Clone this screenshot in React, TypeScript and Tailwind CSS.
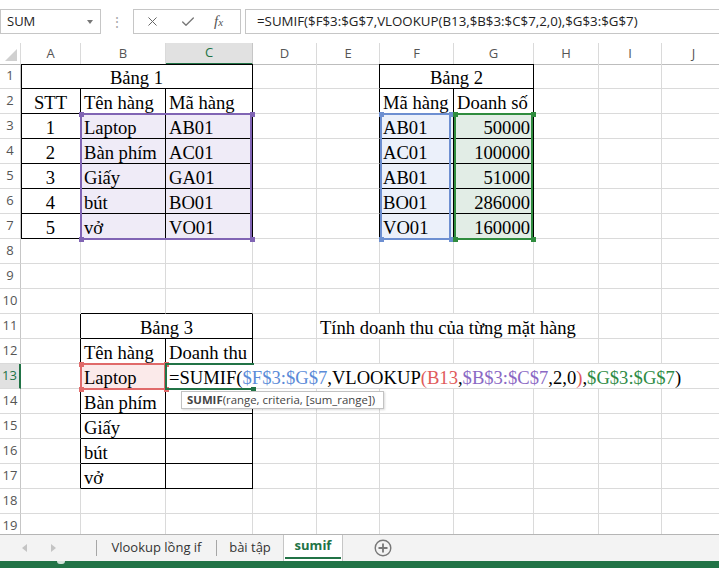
import type { ReactNode } from "react";
import { Check, X } from "lucide-react";

const GRID = "grid grid-cols-[21px_60px_85px_87px_64px_63px_74px_80px_65px_63px_64px]";
const COLS = ["A", "B", "C", "D", "E", "F", "G", "H", "I", "J"];
const ROWS = Array.from({ length: 19 }, (_, i) => i + 1);

// black-bordered tables: [r1, c1, r2, c2]
const boxes = [
  [1, 0, 7, 2],
  [1, 5, 7, 6],
  [11, 1, 17, 2],
];
const inBox = (r: number, c: number) =>
  boxes.some(([r1, c1, r2, c2]) => r >= r1 && r <= r2 && c >= c1 && c <= c2);

const PURPLE = "bg-[#efebf7]";
const BLUE = "bg-[#ebf0fa]";
const GREEN = "bg-[#e2ede6]";
const RED = "bg-[#fbeaea]";

type Cell = { c: number; span?: number; text?: ReactNode; align?: "l" | "c" | "r"; fill?: string; over?: boolean };

const formula = (
  <>
    =SUMIF(<span className="text-[#5b8bd8]">$F$3:$G$7</span>,VLOOKUP
    <span className="text-[#e05a5a]">(B13</span>,<span className="text-[#8a68c4]">$B$3:$C$7</span>,2,0
    <span className="text-[#e05a5a]">)</span>,<span className="text-[#2e8b45]">$G$3:$G$7</span>)
  </>
);

const items = [
  ["Laptop", "AB01", "AB01", "50000"],
  ["Bàn phím", "AC01", "AC01", "100000"],
  ["Giấy", "GA01", "AB01", "51000"],
  ["bút", "BO01", "BO01", "286000"],
  ["vở", "VO01", "VO01", "160000"],
];

const data: Record<number, Cell[]> = {
  1: [
    { c: 0, span: 3, text: "Bảng 1", align: "c" },
    { c: 5, span: 2, text: "Bảng 2", align: "c" },
  ],
  2: [
    { c: 0, text: "STT", align: "c" },
    { c: 1, text: "Tên hàng" },
    { c: 2, text: "Mã hàng" },
    { c: 5, text: "Mã hàng" },
    { c: 6, text: "Doanh số" },
  ],
  11: [
    { c: 1, span: 2, text: "Bảng 3", align: "c" },
    { c: 4, text: "Tính doanh thu của từng mặt hàng", over: true },
  ],
  12: [
    { c: 1, text: "Tên hàng" },
    { c: 2, text: "Doanh thu" },
  ],
  13: [
    { c: 1, text: "Laptop", fill: RED },
    { c: 2, text: formula, over: true },
  ],
  14: [{ c: 1, text: "Bàn phím" }],
  15: [{ c: 1, text: "Giấy" }],
  16: [{ c: 1, text: "bút" }],
  17: [{ c: 1, text: "vở" }],
};

items.forEach(([name, code, code2, sales], i) => {
  data[i + 3] = [
    { c: 0, text: String(i + 1), align: "c" },
    { c: 1, text: name, fill: PURPLE },
    { c: 2, text: code, fill: PURPLE },
    { c: 5, text: code2, fill: BLUE },
    { c: 6, text: sales, align: "r", fill: GREEN },
  ];
});

function SheetRow({ r }: { r: number }) {
  const cells = data[r] ?? [];
  const out: ReactNode[] = [];
  let c = 0;
  while (c < 10) {
    const cell = cells.find((x) => x.c === c);
    const span = cell?.span ?? 1;
    const last = c + span - 1;
    const rightBlack = inBox(r, last) || inBox(r, last + 1);
    const bottomBlack = inBox(r, c) || inBox(r + 1, c);
    let shadow = "";
    if (r === 1 && c === 0 && inBox(r, c)) shadow = "shadow-[inset_1px_1px_0_#000]";
    else if (r === 1 && inBox(r, c)) shadow = "shadow-[inset_0_1px_0_#000]";
    else if (c === 0 && inBox(r, c)) shadow = "shadow-[inset_1px_0_0_#000]";
    const align = cell?.align ?? "l";
    out.push(
      <div
        key={c}
        className={`flex h-[25px] min-w-0 border-r border-b ${span === 3 ? "col-span-3" : span === 2 ? "col-span-2" : ""} ${
          rightBlack ? "border-r-black" : "border-r-[#dadada]"
        } ${bottomBlack ? "border-b-black" : "border-b-[#dadada]"} ${shadow} ${cell?.fill ?? ""} ${
          align === "c" ? "justify-center" : align === "r" ? "justify-end pr-[3px]" : "pl-[3px]"
        } ${cell?.over ? "overflow-visible" : "overflow-hidden"}`}
      >
        {cell?.text != null &&
          (cell.over ? (
            <span className="relative z-10 h-[24px] whitespace-nowrap bg-white pr-[3px] leading-[27px]">{cell.text}</span>
          ) : (
            <span className="whitespace-nowrap leading-[27px]">{cell.text}</span>
          ))}
      </div>
    );
    c += span;
  }
  const sel = r === 13;
  return (
    <div className={GRID}>
      <div
        className={`flex h-[25px] items-center justify-center border-b border-b-[#dadada] font-['Open_Sans',sans-serif] text-[13px] ${
          sel ? "border-r-2 border-r-[#217346] bg-[#e1e1e1] text-[#217346]" : "border-r border-r-[#c6c6c6] text-[#555]"
        }`}
      >
        {r}
      </div>
      {out}
    </div>
  );
}

function Handle({ x, y, color }: { x: number; y: number; color: string }) {
  return <div className={`absolute h-[5px] w-[5px] ${color}`} style={{ left: x - 2, top: y - 2 }} />;
}

function RangeBox({ x1, y1, x2, y2, border, dot }: { x1: number; y1: number; x2: number; y2: number; border: string; dot: string }) {
  return (
    <>
      <div className={`absolute border-2 ${border}`} style={{ left: x1 - 1, top: y1 - 1, width: x2 - x1 + 1, height: y2 - y1 + 2 }} />
      <Handle x={x1} y={y1} color={dot} />
      <Handle x={x2} y={y1} color={dot} />
      <Handle x={x1} y={y2} color={dot} />
      <Handle x={x2} y={y2} color={dot} />
    </>
  );
}

export default function App() {
  return (
    <div className="flex h-[568px] w-[719px] flex-col overflow-hidden bg-white">
      {/* formula bar */}
      <div className="flex h-[43px] shrink-0 items-start pt-[9px] font-['Open_Sans',sans-serif] text-[13px] text-[#222]">
        <div className="flex h-[25px] w-[101px] shrink-0 items-center justify-between border border-[#c6c6c6] pl-[6px] pr-[7px]">
          <span>SUM</span>
          <span className="mt-[1px] h-0 w-0 border-x-[3.5px] border-t-[4px] border-x-transparent border-t-[#777]" />
        </div>
        <div className="flex h-[25px] w-[32px] shrink-0 items-center justify-center text-[14px] leading-none text-[#aaa]">⋮</div>
        <div className="flex h-[25px] w-[108px] shrink-0 items-center border border-[#c6c6c6]">
          <X className="ml-[11px] h-[15px] w-[15px] text-[#666]" strokeWidth={1.6} />
          <Check className="ml-[20px] h-[16px] w-[16px] text-[#777]" strokeWidth={2} />
          <span className="ml-[18px] font-['Liberation_Serif',serif] text-[15px] italic text-[#555]">
            f<span className="text-[11px]">x</span>
          </span>
        </div>
        <div className="ml-[4px] mr-[-20px] flex h-[25px] flex-1 items-center border border-[#c6c6c6] pl-[11px] text-[13.3px]">
          <span className="whitespace-nowrap">=SUMIF($F$3:$G$7,VLOOKUP(B13,$B$3:$C$7,2,0),$G$3:$G$7)</span>
        </div>
      </div>

      {/* column headers */}
      <div className={`${GRID} h-[21px] shrink-0 font-['Open_Sans',sans-serif] text-[13px] text-[#555]`}>
        <div className="flex items-end justify-end border-r border-b border-r-[#dadada] border-b-[#bdbdbd] pr-[3px] pb-[3px]">
          <svg width="12" height="12" viewBox="0 0 12 12">
            <path d="M12 0V12H0Z" fill="#d0d0d0" />
          </svg>
        </div>
        {COLS.map((col) =>
          col === "C" ? (
            <div
              key={col}
              className="flex items-center justify-center border-r border-b-2 border-r-[#c6c6c6] border-b-[#217346] bg-[#e1e1e1] text-[#217346]"
            >
              {col}
            </div>
          ) : (
            <div key={col} className="flex items-center justify-center border-r border-b border-r-[#dadada] border-b-[#bdbdbd]">
              {col}
            </div>
          )
        )}
      </div>

      {/* sheet */}
      <div className="relative h-[470px] shrink-0 overflow-hidden font-['Liberation_Serif',serif] text-[18.6px] text-black">
        {ROWS.map((r) => (
          <SheetRow key={r} r={r} />
        ))}

        <RangeBox x1={81} y1={50} x2={252} y2={175} border="border-[#8064b4]" dot="bg-[#8064b4]" />
        <RangeBox x1={381} y1={50} x2={451} y2={175} border="border-[#6d8fd1]" dot="bg-[#6d8fd1]" />
        <RangeBox x1={455} y1={50} x2={533} y2={175} border="border-[#2f8c3e]" dot="bg-[#2f8c3e]" />
        <RangeBox x1={81} y1={300} x2={166} y2={325} border="border-[#e06a6a]" dot="bg-[#e06a6a]" />

        {/* active cell C13 (in edit mode) */}
        <div className="absolute left-[165px] top-[299px] z-20 h-[27px] w-[89px] border-y-2 border-l-2 border-[#217346]" />
        <div className="absolute left-[251px] top-[323px] z-20 h-[5px] w-[5px] bg-[#217346]" />

        {/* function tooltip */}
        <div className="absolute left-[181px] top-[327px] z-30 flex h-[18px] w-[203px] items-center whitespace-nowrap border border-[#c2c2c2] bg-white pl-[5px] font-['Open_Sans',sans-serif] text-[11.4px] text-[#444] shadow-[1px_1px_2px_rgba(0,0,0,0.15)]">
          <span>
            <b>SUMIF</b>(range, criteria, [sum_range])
          </span>
        </div>
      </div>

      {/* sheet tabs */}
      <div className="flex h-[27px] shrink-0 items-stretch border-t border-[#b5b5b5] bg-[#f3f3f3] font-['Open_Sans',sans-serif] text-[13px] text-[#333]">
        <div className="flex w-[96px] items-center">
          <span className="ml-[22px] h-0 w-0 border-y-[4px] border-r-[5px] border-y-transparent border-r-[#c4c4c4]" />
          <span className="ml-[24px] h-0 w-0 border-y-[4px] border-l-[5px] border-y-transparent border-l-[#c4c4c4]" />
        </div>
        <div className="my-[5px] w-px bg-[#a6a6a6]" />
        <div className="flex w-[119px] items-center justify-center">Vlookup lồng if</div>
        <div className="my-[5px] w-px bg-[#a6a6a6]" />
        <div className="flex w-[66px] items-center justify-center">bài tập</div>
        <div className="flex w-[60px] flex-col border-x border-[#c6c6c6] bg-white">
          <div className="flex flex-1 items-center justify-center font-bold text-[#217346]">sumif</div>
          <div className="mx-[1px] mb-[2px] h-[2px] bg-[#217346]" />
        </div>
        <div className="flex w-[78px] items-center justify-center pl-[2px]">
          <svg width="18" height="18" viewBox="0 0 18 18" fill="none" stroke="#777" strokeWidth="1.4">
            <circle cx="9" cy="9" r="7.8" />
            <path d="M9 4.5v9M4.5 9h9" strokeWidth="1.8" />
          </svg>
        </div>
      </div>

      {/* status bar */}
      <div className="flex h-[7px] shrink-0 bg-[#217346]">
        <div className="ml-[57px] h-[3px] w-[8px] rounded-b-sm bg-white/80" />
      </div>
    </div>
  );
}
